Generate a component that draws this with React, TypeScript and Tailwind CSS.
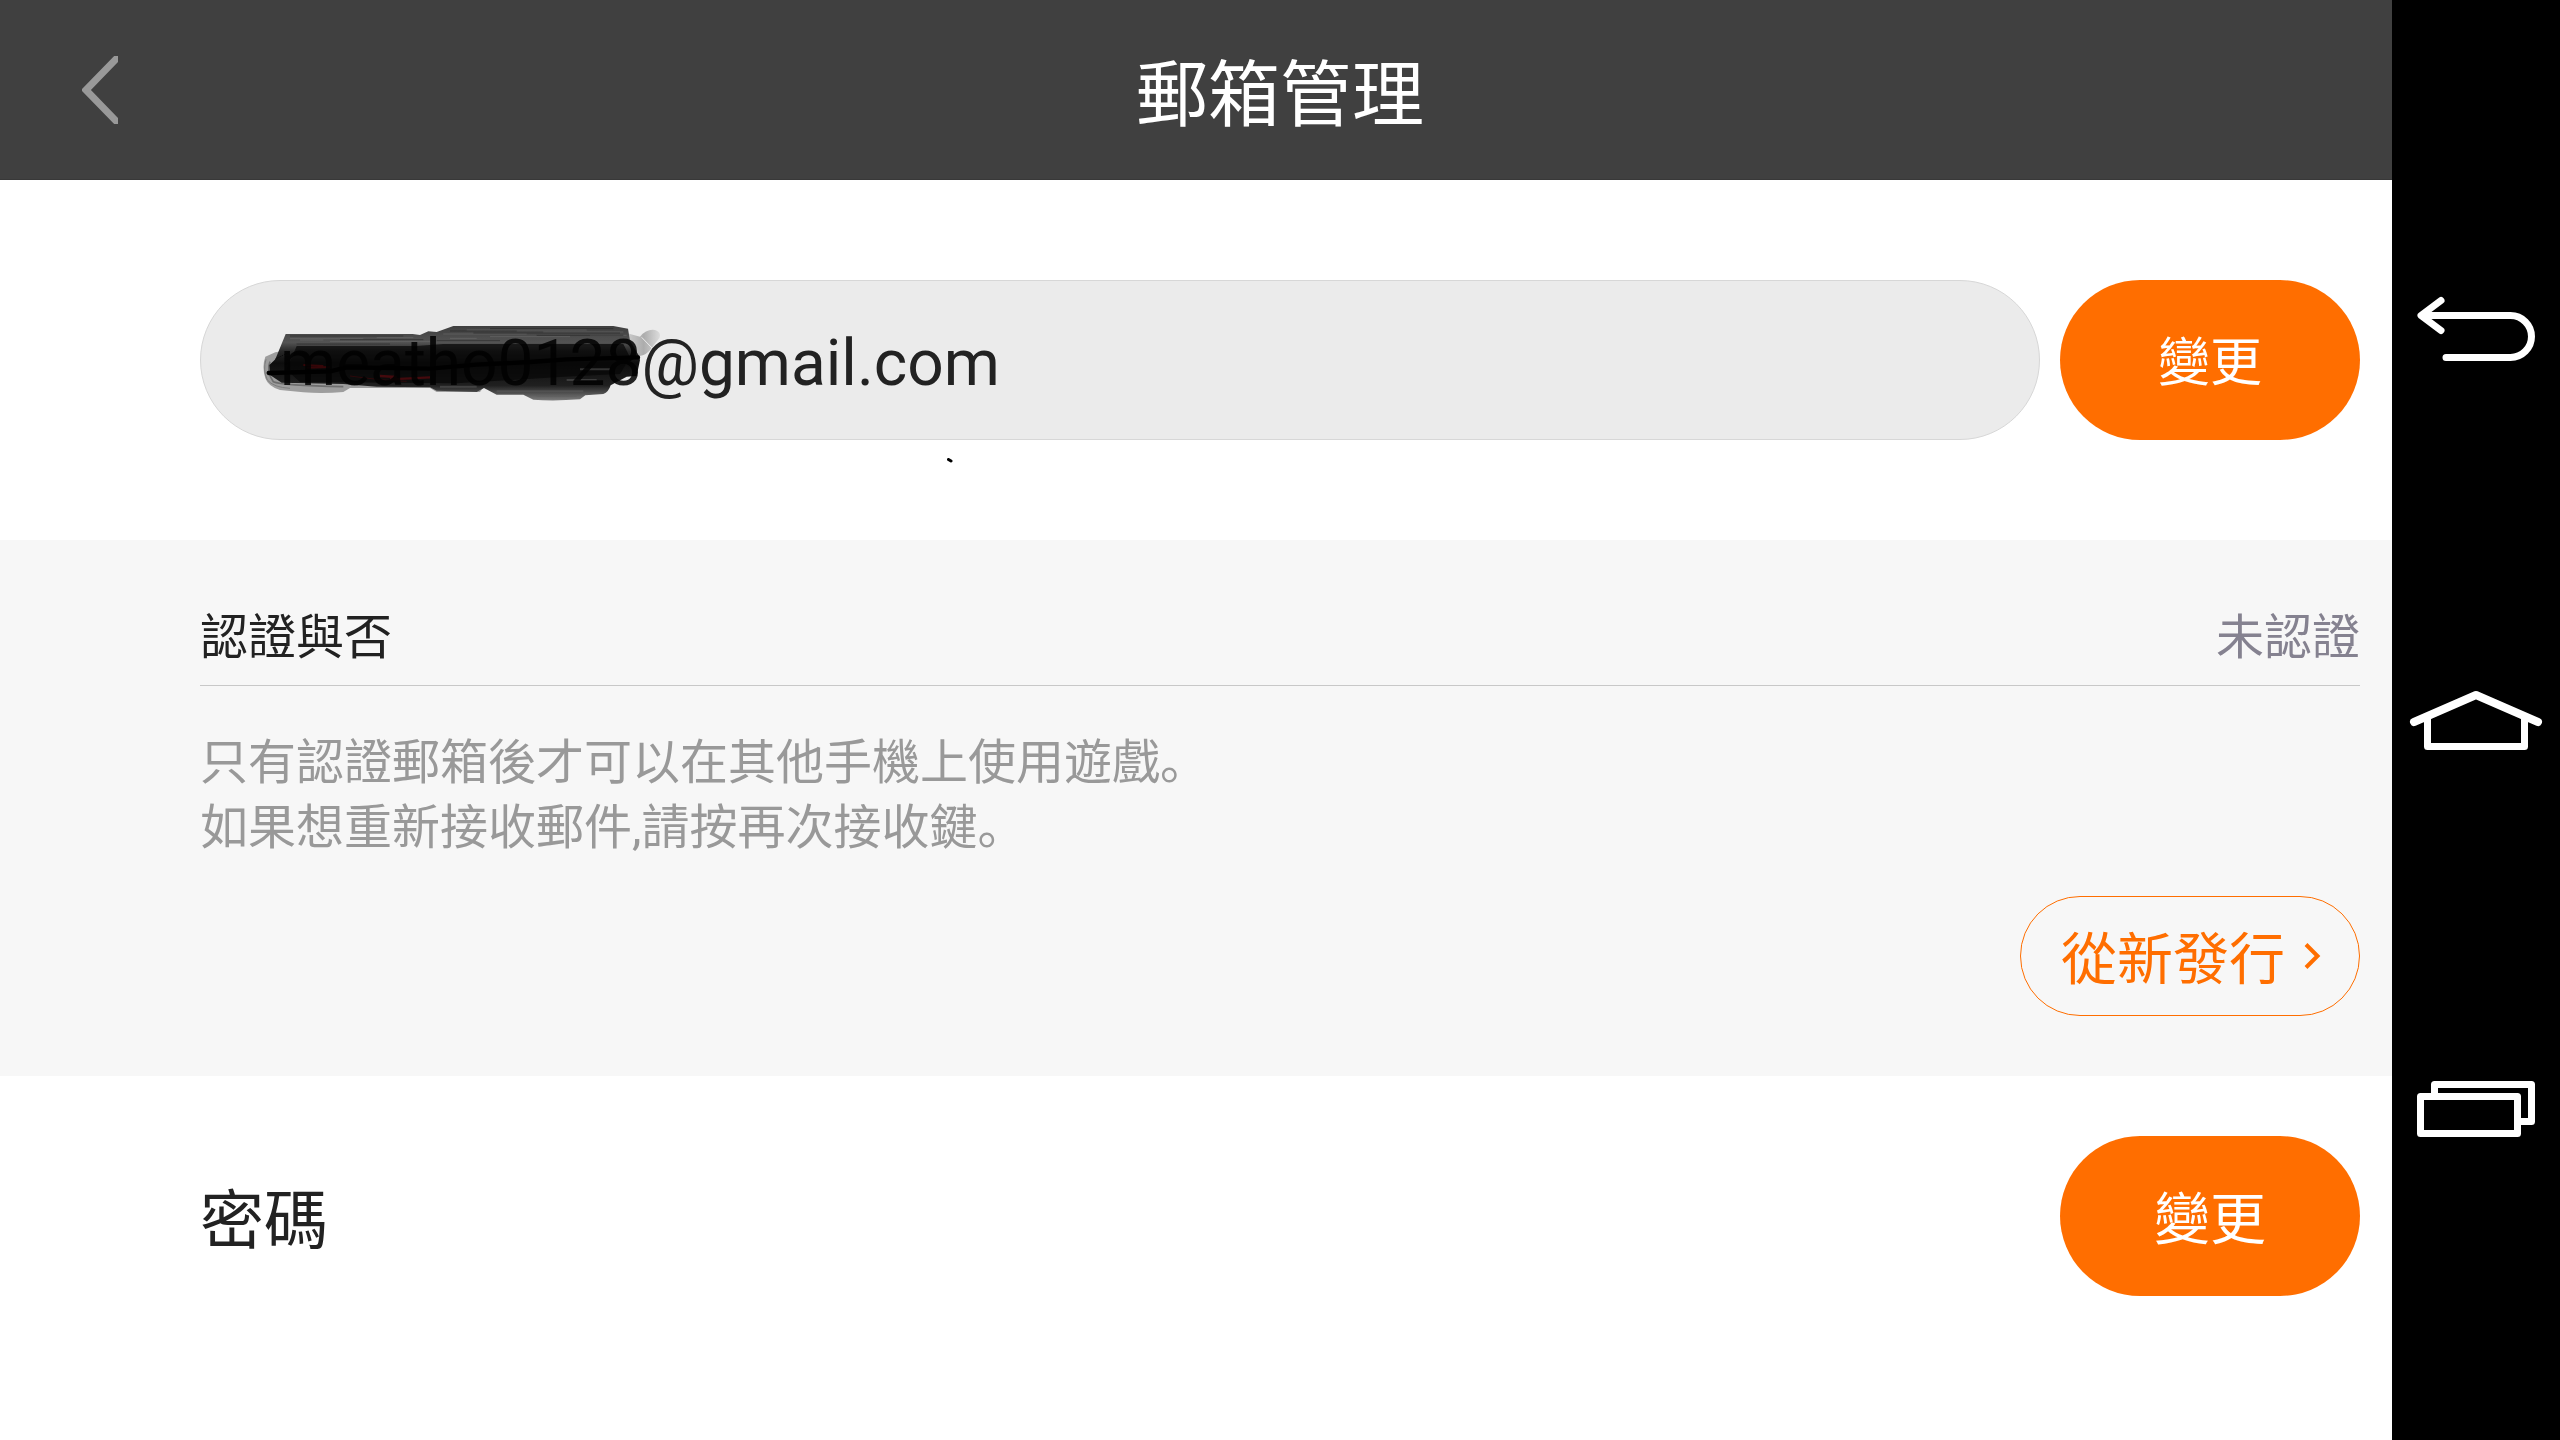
import { useState } from 'react';
import type { ReactNode } from 'react';

interface ChangeButtonProps {
  label: string;
  textClass: string;
}

function ChangeButton({ label, textClass }: ChangeButtonProps) {
  return (
    <button
      type="button"
      aria-label={label}
      className={`h-40 w-[300px] flex-shrink-0 rounded-full bg-[#ff6e00] pt-2 text-white ${textClass}`}
    >
      變更
    </button>
  );
}

function NavButton({ label, children }: { label: string; children: ReactNode }) {
  return (
    <button type="button" aria-label={label} className="h-[120px] w-full">
      <svg
        viewBox="0 0 168 120"
        className="h-[120px] w-[168px]"
        fill="none"
        stroke="#fff"
        strokeWidth="7"
        strokeLinejoin="round"
        strokeLinecap="round"
      >
        {children}
      </svg>
    </button>
  );
}

// Marker strokes over the account name
function Scribble() {
  return (
    <svg
      viewBox="210 159 1212 240"
      className="pointer-events-none absolute left-[60px] top-[43px] h-20 w-[404px] mix-blend-multiply"
      fill="none"
      aria-hidden="true"
    >
      <defs>
        <linearGradient id="ink" x1="0" y1="0" x2="0" y2="1">
          <stop offset="0" stopColor="#444" />
          <stop offset="0.22" stopColor="#5a5a5a" />
          <stop offset="0.34" stopColor="#2a2a2a" />
          <stop offset="0.5" stopColor="#0e0e0e" />
          <stop offset="0.8" stopColor="#222" />
          <stop offset="1" stopColor="#888" />
        </linearGradient>
        <linearGradient id="smudge" x1="0" y1="0" x2="1" y2="0">
          <stop offset="0" stopColor="#ddd" />
          <stop offset="0.5" stopColor="#bbb" />
          <stop offset="1" stopColor="#f0f0f0" />
        </linearGradient>
      </defs>
      <path
        d="M226 260L256 247L300 240L760 330L880 352L870 366L740 366L720 354H480L460 366Q400 371 340 367L270 360Q235 350 226 325Q215 290 226 260Z"
        fill="#aaa"
      />
      <path d="M228 268Q218 300 232 330Q250 352 300 355" stroke="#888" strokeWidth="3" />
      <path d="M240 275Q228 305 250 335Q275 346 460 350" stroke="#777" strokeWidth="5" />
      <path
        d="M1312 190L1350 200Q1370 176 1395 180Q1416 188 1408 204L1385 234Q1370 256 1348 258L1325 240Z"
        fill="url(#smudge)"
      />
      <path d="M1355 202L1386 234" stroke="#fff" strokeWidth="3" />
      <path
        d="M287 192H668L690 195L715 184L740 186L790 168H1270L1314 176L1320 212L1346 256L1350 270L1340 318L1310 320L1262 346Q1256 366 1240 372L1186 376L1170 388Q1090 394 1030 389L1000 374H920L882 354L860 366L740 362L720 352L560 350L460 342L275 338L240 315L238 285L256 268Z"
        fill="url(#ink)"
      />
      {/* bristle streaks */}
      <path
        d="M300 206H520M560 203H670M420 214H720M330 210H400M760 192H1010M830 180H1190M1060 186H1300M900 200H1140M780 205H860M1200 196H1310"
        stroke="#777"
        strokeWidth="3"
        opacity="0.6"
      />
      <path
        d="M300 198H640M450 209H700M780 183H980M850 189H1290M900 176H1270M1040 196H1300M320 222H600M740 212H930"
        stroke="#222"
        strokeWidth="3"
        opacity="0.5"
      />
      <path d="M320 228H680L760 222H1300L1320 262L1290 312L1120 320L800 340L330 336L290 300Z" fill="#060606" opacity="0.7" />
      <path d="M750 350H860M920 364H1180M1040 378H1160M1130 330H1220M1170 298H1260" stroke="#666" strokeWidth="6" opacity="0.5" />
      <path d="M255 268L300 245" stroke="#000" strokeWidth="2" strokeDasharray="3 3" />
      <path d="M340 285L400 288M350 293L420 291" stroke="#3a0608" strokeWidth="6" />
      <path d="M570 318L620 321M600 328L720 322" stroke="#4a0a0e" strokeWidth="7" />
      <path d="M480 318Q580 332 650 334" stroke="#30080a" strokeWidth="3" />
      <path
        d="M236 309L420 304L470 292L720 296L860 284L1020 276L1130 268L1344 262"
        stroke="#000"
        strokeWidth="13"
        strokeLinecap="round"
        strokeLinejoin="round"
      />
    </svg>
  );
}

export default function App() {
  const [email, setEmail] = useState('meatho0128@gmail.com');

  return (
    <div className="flex min-h-screen bg-white font-['Roboto','Noto_Sans_CJK_SC',sans-serif] text-[#222]">
      <div className="min-w-0 flex-1">
        {/* Title bar */}
        <header className="grid h-[180px] grid-cols-[168px_1fr] items-center border-b border-[#383838] bg-[#404040]">
          <button type="button" aria-label="返回" className="flex h-full items-center justify-end pr-[50px]">
            <svg viewBox="0 0 36 68" className="h-[68px] w-9" fill="none" stroke="#999" strokeWidth="7">
              <path d="M38 -1L4 34L38 69" />
            </svg>
          </button>
          <h1 className="pt-3 text-center text-[72px] leading-[88px] text-white">郵箱管理</h1>
        </header>

        <main>
          {/* Email */}
          <section className="relative flex gap-5 py-[100px] pl-[200px] pr-8">
            <div className="relative flex-1">
              <input
                type="email"
                aria-label="郵箱"
                value={email}
                onChange={e => setEmail(e.target.value)}
                className="block h-40 w-full rounded-full border border-[#d7d7d7] bg-[#ebebeb] px-[79px] pt-1.5 text-[64px] focus:outline-none"
              />
              <Scribble />
            </div>
            <ChangeButton label="變更郵箱" textClass="text-[52px]" />
            <svg viewBox="0 0 6 5" className="absolute left-[947px] top-[278px] h-[5px] w-[6px]" aria-hidden="true">
              <path d="M1.5 1.5L4 3" stroke="#000" strokeWidth="3" strokeLinecap="round" />
            </svg>
          </section>

          {/* Verification */}
          <section className="bg-[#f7f7f7] pb-[60px] pl-[200px] pr-8 pt-[62px] text-[48px]">
            <div className="flex justify-between border-b border-[#c8c8c8] pb-[11px] leading-[72px]">
              <h2>認證與否</h2>
              <span className="text-[#858290]">未認證</span>
            </div>
            <p className="mt-11 leading-[65px] text-[#999]">
              只有認證郵箱後才可以在其他手機上使用遊戲。
              <br />
              如果想重新接收郵件,請按再次接收鍵。
            </p>
            <div className="mt-9 flex justify-end">
              <button
                type="button"
                className="flex h-[120px] w-[340px] items-center justify-between rounded-full border border-[#ff6e00] pl-10 pr-[38px] text-[56px] text-[#ff6e00]"
              >
                <span className="pt-2">從新發行</span>
                <svg viewBox="0 0 17 26" className="h-[26px] w-[17px]" fill="none" stroke="#ff6e00" strokeWidth="4">
                  <path d="M2 1.5L13.5 13L2 24.5" />
                </svg>
              </button>
            </div>
          </section>

          {/* Password */}
          <section className="flex items-center justify-between py-[60px] pl-[200px] pr-8">
            <h2 className="pt-3 text-[64px]">密碼</h2>
            <ChangeButton label="變更密碼" textClass="text-[56px]" />
          </section>
        </main>
      </div>

      {/* System navigation */}
      <nav className="flex w-[168px] flex-shrink-0 flex-col items-center justify-center gap-[270px] bg-black">
        <NavButton label="返回鍵">
          <path d="M49 30.5L29 45.5L49 60.5M30 45.5H118.5A21 21 0 0 1 118.5 87.5H54" />
        </NavButton>
        <NavButton label="主畫面">
          <path d="M22 62L84 35L146 62" strokeWidth="8" />
          <path d="M35.5 58V86.5H132.5V58" />
        </NavButton>
        <NavButton label="最近使用">
          <path d="M28.5 46.5H125.5V83.5H28.5ZM42.5 46.5V34.5H139.5V71.5H125.5" />
        </NavButton>
      </nav>
    </div>
  );
}
